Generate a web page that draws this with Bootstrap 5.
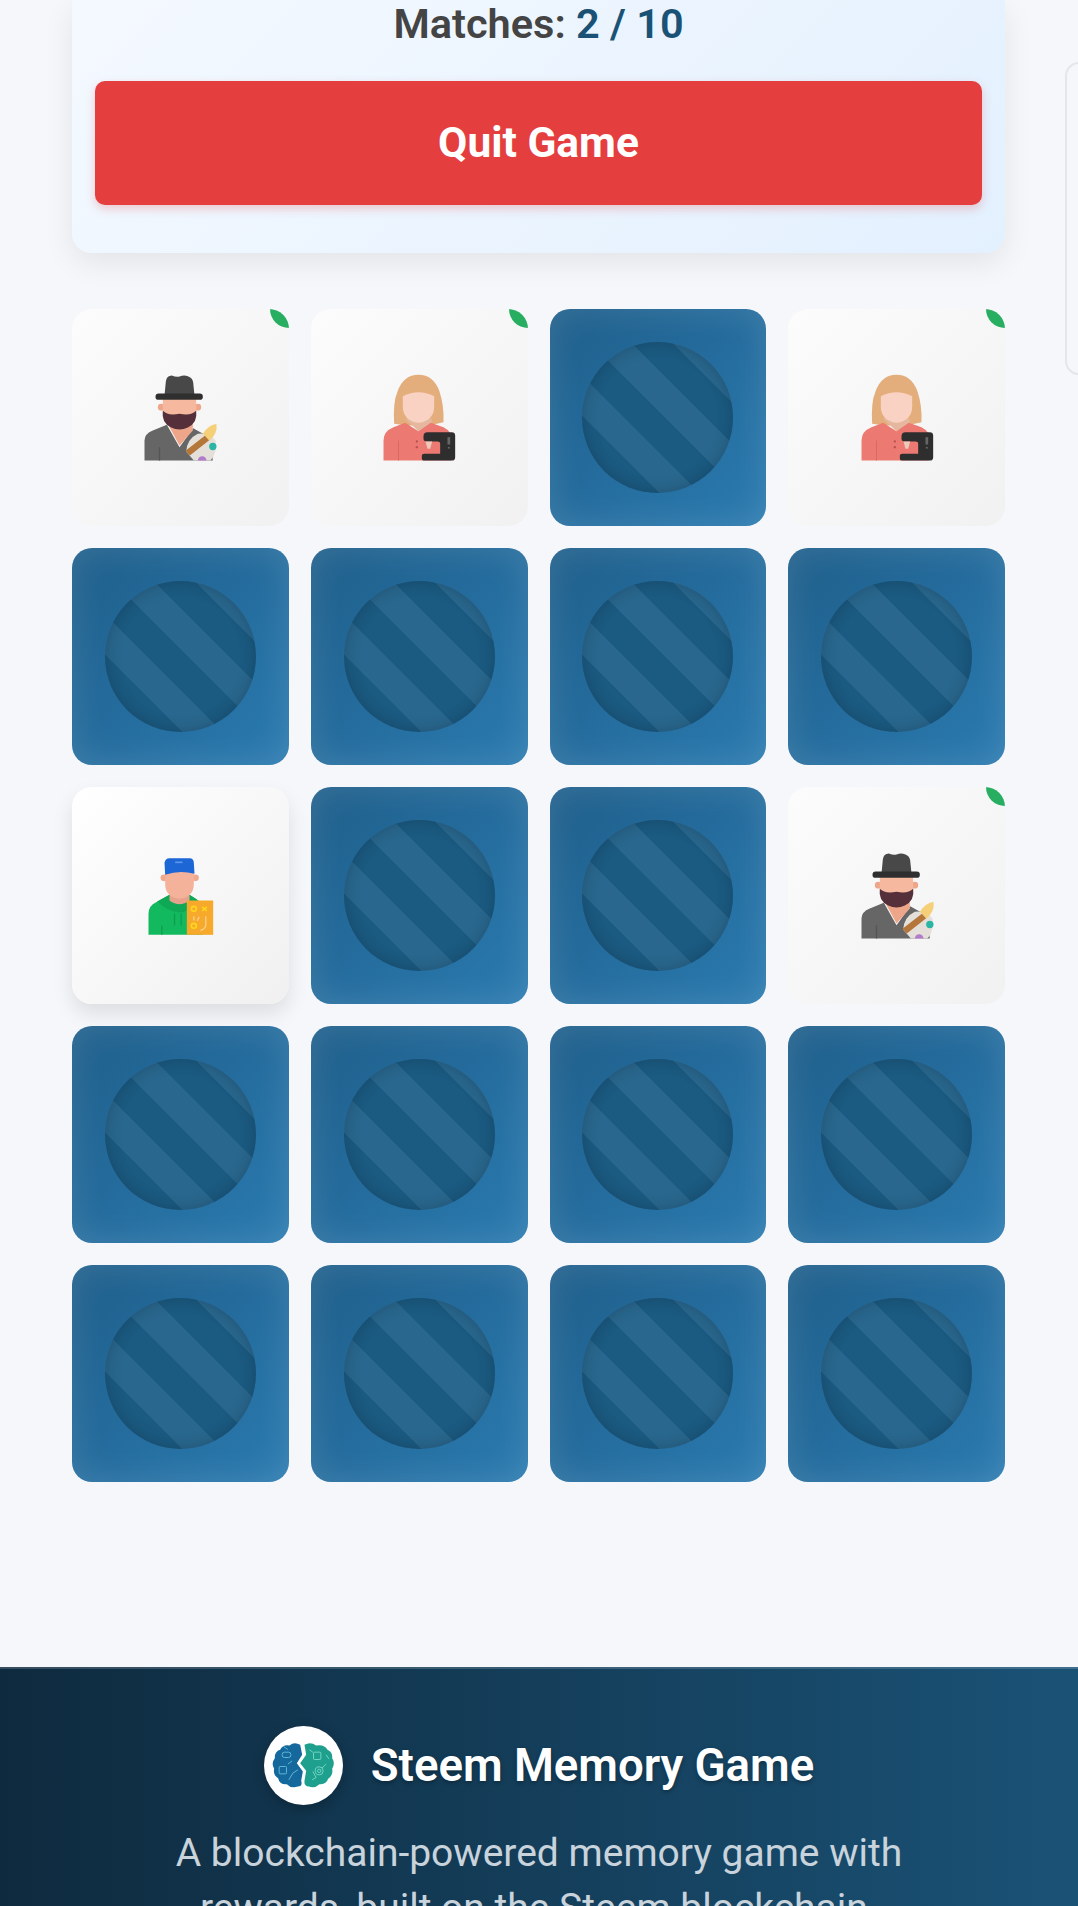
<!DOCTYPE html>
<html lang="en">
<head>
    <meta charset="UTF-8">
    <title>Steem Memory Game</title>
    <link href="https://cdn.jsdelivr.net/npm/bootstrap@5.3.3/dist/css/bootstrap.min.css" rel="stylesheet">
    <style>
        html, body {
            height: 1906px;
            overflow: hidden;
        }

        body {
            background-color: #f5f7fb;
            font-family: Roboto, "Liberation Sans", sans-serif;
            color: #444;
        }

        .game-wrap {
            height: 1667px;
            padding: 0 73px 0 72px;
            position: relative;
        }

        .status-panel {
            height: 253px;
            padding: 0 23px;
            margin-bottom: 56px;
            background: linear-gradient(135deg, #f4f9ff, #e3f0fe);
            border-radius: 0 0 20px 20px;
            box-shadow: 0 10px 30px rgba(0, 0, 0, .08);
        }

        .match-line {
            height: 81px;
            padding-bottom: 33px;
            font-size: 41.5px;
            font-weight: 600;
            line-height: 46px;
        }

        .match-line b {
            font-weight: 600;
            color: #1a5276;
        }

        .btn-quit {
            height: 124px;
            background-color: #e53e3e;
            border: 0;
            border-radius: 10px;
            color: #fff;
            font-size: 42.5px;
            font-weight: 700;
            box-shadow: 0 4px 10px rgba(229, 62, 62, .25);
        }

        .tile-grid {
            display: grid;
            grid-template-columns: repeat(4, 1fr);
            gap: 22px;
        }

        .tile {
            height: 217px;
            border-radius: 20px;
            overflow: hidden;
        }

        .tile-back {
            background: linear-gradient(135deg, #1f5f8b, #2a7ab0);
            box-shadow: inset 0 0 36px rgba(255, 255, 255, .13);
        }

        .tile-back i {
            display: block;
            width: 151px;
            height: 151px;
            border-radius: 50%;
            box-shadow: inset 0 0 16px rgba(0, 0, 0, .2);
            background: repeating-linear-gradient(45deg, #29678e 0, #29678e 25.7px, #1b5a81 25.7px, #1b5a81 54.5px, #29678e 54.5px, #29678e 57.7px);
        }

        .tile-face {
            background: linear-gradient(135deg, #fff, #f0f0f0);
            box-shadow: 0 10px 20px rgba(0, 0, 0, .1);
        }

        .tile-matched {
            position: relative;
            background: linear-gradient(135deg, #fcfcfc, #f1f1f2);
            box-shadow: none;
        }

        .tile-matched::after {
            content: "";
            position: absolute;
            top: -19px;
            right: -19px;
            width: 38px;
            height: 38px;
            border-radius: 50%;
            background: #27ae60;
        }

        .tile-face svg {
            width: 90px;
            height: 100px;
        }

        .side-stub {
            position: absolute;
            left: 1065px;
            top: 62px;
            width: 60px;
            height: 313px;
            border: 2px solid #e4e6ea;
            border-radius: 14px;
        }

        .site-footer {
            height: 239px;
            overflow: hidden;
            padding-top: 59px;
            text-align: center;
            background: linear-gradient(90deg, #0e2a3e, #1a5276);
            box-shadow: inset 0 2px 0 rgba(255, 255, 255, .17);
            color: #fff;
        }

        .foot-brand {
            gap: 28px;
            margin-bottom: 21px;
        }

        .foot-logo {
            width: 79px;
            height: 79px;
            border-radius: 50%;
            box-shadow: 0 4px 12px rgba(0, 0, 0, .25);
        }

        .foot-title {
            font-size: 45.6px;
            font-weight: 600;
            line-height: 48px;
            text-shadow: 0 2px 4px rgba(0, 0, 0, .3);
        }

        .foot-text {
            width: 800px;
            font-size: 39px;
            line-height: 55px;
            color: #c8d3dc;
        }
    </style>
</head>
<body>

<svg class="d-none">
    <symbol id="hat-man" viewBox="1.5 7.5 270 300">
        <path d="M30 285V225Q30 205 55 195L97 178 135 245 176 188 225 215 235 285Z" fill="#666"/>
        <path d="M75 245V285" stroke="#555" stroke-width="4"/>
        <path d="M97 170H175V195L135 240Z" fill="#eea68a"/>
        <circle cx="80" cy="125" r="10" fill="#eea68a"/>
        <circle cx="190" cy="125" r="10" fill="#eea68a"/>
        <path d="M85 95H185V145Q185 185 135 190 85 185 85 145Z" fill="#f6b9a0"/>
        <path d="M85 136Q100 152 135 145 170 152 185 136 190 172 160 186 135 198 110 186 80 172 85 136Z" fill="#55303a"/>
        <path d="M90 90 94 48Q96 30 112 30 124 35 135 33 148 28 160 32 174 36 176 50L180 90Z" fill="#484848"/>
        <rect x="63" y="84" width="142" height="19" rx="9.5" fill="#2f2f2f"/>
        <path d="M155 258Q158 220 190 205 225 200 243 225 250 260 228 285H178Z" fill="#e4dfd9"/>
        <path d="M153 256 212 210 224 224 166 270Z" fill="#b5763a"/>
        <path d="M205 205Q220 180 246 175 250 205 225 225Z" fill="#f5d079"/>
        <circle cx="235" cy="243" r="11" fill="#2bb5a5"/>
        <path d="M190 285A13 13 0 1 1 216 285Z" fill="#b27bc9"/>
    </symbol>
    <symbol id="sew-woman" viewBox="1.5 7.5 270 300">
        <path d="M62 175Q58 110 72 78 90 28 135 28 180 28 198 78 212 120 210 170L165 180H100Z" fill="#e3ae7b"/>
        <path d="M95 160H175V180L135 197Z" fill="#e5b79f"/>
        <path d="M30 285V225Q30 197 60 185L95 172 135 197 172 172 210 185Q225 192 232 205V285Z" fill="#ec7a72"/>
        <path d="M75 225V285" stroke="#d96a63" stroke-width="3"/>
        <circle cx="130" cy="228" r="3.5" fill="#b9534f"/>
        <circle cx="130" cy="245" r="3.5" fill="#b9534f"/>
        <path d="M88 92Q135 68 182 92V122Q182 165 135 172 88 165 88 122Z" fill="#fad2c3"/>
        <path d="M150 212Q150 200 162 200H235Q245 200 245 210V275Q245 285 235 285H150Q145 285 145 278V270Q145 265 152 265H200V235Q200 228 192 228H160Q150 228 150 220Z" fill="#2e2e2e"/>
        <path d="M156 228H176L170 250H162Z" fill="#ecc9bb"/>
        <rect x="222" y="215" width="8" height="22" fill="#666"/>
        <circle cx="226" cy="247" r="3" fill="#666"/>
    </symbol>
    <symbol id="cap-boy" viewBox="1.5 1.5 270 300">
        <path d="M42 268V205Q42 180 65 170L105 148H165L200 170 205 268Z" fill="#12b95f"/>
        <path d="M68 168 105 148Q135 190 165 148L187 162Q160 205 135 200 100 200 68 168Z" fill="#0fa956"/>
        <path d="M120 205V240M140 205V240M82 240V268" stroke="#0d9d4e" stroke-width="4"/>
        <circle cx="88" cy="97" r="10" fill="#eea98e"/>
        <circle cx="183" cy="97" r="10" fill="#eea98e"/>
        <path d="M105 135H165V165Q135 188 105 165Z" fill="#e6a28b"/>
        <path d="M92 75H178V115Q178 155 135 160 92 155 92 115Z" fill="#f5b29b"/>
        <path d="M90 52Q92 38 105 38H165Q178 38 178 52L180 85Q135 72 92 88Z" fill="#1c66d6"/>
        <rect x="122" y="48" width="22" height="5" fill="#5f97e8"/>
        <rect x="157" y="165" width="79" height="103" fill="#f6a92b"/>
        <circle cx="178" cy="190" r="7.5" fill="none" stroke="#ffd51e" stroke-width="5"/>
        <circle cx="178" cy="241" r="7.5" fill="none" stroke="#ffd51e" stroke-width="5"/>
        <path d="M203 184 217 196M217 184 203 196" stroke="#ffd51e" stroke-width="5"/>
        <path d="M214 212V238Q214 250 198 255M178 212V225M194 214 188 226" fill="none" stroke="#fbd08a" stroke-width="4"/>
    </symbol>
</svg>

<div class="game-wrap">
    <div class="status-panel text-center">
        <div class="match-line d-flex align-items-center justify-content-center">
            <span>Matches:&nbsp;<b>2 / 10</b></span>
        </div>
        <button class="btn btn-quit w-100">Quit Game</button>
    </div>

    <div class="tile-grid">
        <div class="tile tile-face tile-matched d-flex align-items-center justify-content-center"><svg><use href="#hat-man"/></svg></div>
        <div class="tile tile-face tile-matched d-flex align-items-center justify-content-center"><svg><use href="#sew-woman"/></svg></div>
        <div class="tile tile-back d-flex align-items-center justify-content-center"><i></i></div>
        <div class="tile tile-face tile-matched d-flex align-items-center justify-content-center"><svg><use href="#sew-woman"/></svg></div>

        <div class="tile tile-back d-flex align-items-center justify-content-center"><i></i></div>
        <div class="tile tile-back d-flex align-items-center justify-content-center"><i></i></div>
        <div class="tile tile-back d-flex align-items-center justify-content-center"><i></i></div>
        <div class="tile tile-back d-flex align-items-center justify-content-center"><i></i></div>

        <div class="tile tile-face d-flex align-items-center justify-content-center"><svg><use href="#cap-boy"/></svg></div>
        <div class="tile tile-back d-flex align-items-center justify-content-center"><i></i></div>
        <div class="tile tile-back d-flex align-items-center justify-content-center"><i></i></div>
        <div class="tile tile-face tile-matched d-flex align-items-center justify-content-center"><svg><use href="#hat-man"/></svg></div>

        <div class="tile tile-back d-flex align-items-center justify-content-center"><i></i></div>
        <div class="tile tile-back d-flex align-items-center justify-content-center"><i></i></div>
        <div class="tile tile-back d-flex align-items-center justify-content-center"><i></i></div>
        <div class="tile tile-back d-flex align-items-center justify-content-center"><i></i></div>

        <div class="tile tile-back d-flex align-items-center justify-content-center"><i></i></div>
        <div class="tile tile-back d-flex align-items-center justify-content-center"><i></i></div>
        <div class="tile tile-back d-flex align-items-center justify-content-center"><i></i></div>
        <div class="tile tile-back d-flex align-items-center justify-content-center"><i></i></div>
    </div>

    <div class="side-stub"></div>
</div>

<footer class="site-footer">
    <div class="foot-brand d-flex align-items-center justify-content-center">
        <div class="foot-logo">
            <svg viewBox="13.5 13.5 237 237" width="79" height="79">
                <circle cx="132" cy="132" r="118.5" fill="#fff"/>
                <path d="M122 70Q104 60 90 72 70 68 62 85 45 90 46 110 34 125 44 142 40 160 56 170 60 190 82 188 95 202 115 195 130 195 125 178L130 150 112 125 128 100Z" fill="#14689c"/>
                <path d="M135 70Q153 60 170 72 195 68 204 85 220 92 218 110 228 125 218 142 222 160 206 172 200 190 180 188 165 202 148 195 133 195 135 178L140 148 122 125 140 100Z" fill="#1fa08e"/>
                <g fill="none" stroke="#6fc6dd" stroke-width="2.5">
                    <rect x="68" y="92" width="26" height="16" rx="7"/>
                    <rect x="59" y="135" width="22" height="22" rx="3"/>
                    <path d="M98 118 85 128M88 175 100 155 115 145M72 75 85 84"/>
                </g>
                <g fill="none" stroke="#7fe0cd" stroke-width="2.5">
                    <rect x="162" y="92" width="22" height="22" rx="3"/>
                    <circle cx="179" cy="148" r="12"/>
                    <circle cx="179" cy="148" r="5"/>
                    <path d="M187 140 200 128M150 85 160 92M158 175 170 168 160 150M200 100 208 112"/>
                </g>
            </svg>
        </div>
        <div class="foot-title">Steem Memory Game</div>
    </div>
    <p class="foot-text mx-auto mb-0">A blockchain-powered memory game with rewards, built on the Steem blockchain.</p>
</footer>

<script src="https://cdn.jsdelivr.net/npm/bootstrap@5.3.3/dist/js/bootstrap.bundle.min.js"></script>
</body>
</html>
